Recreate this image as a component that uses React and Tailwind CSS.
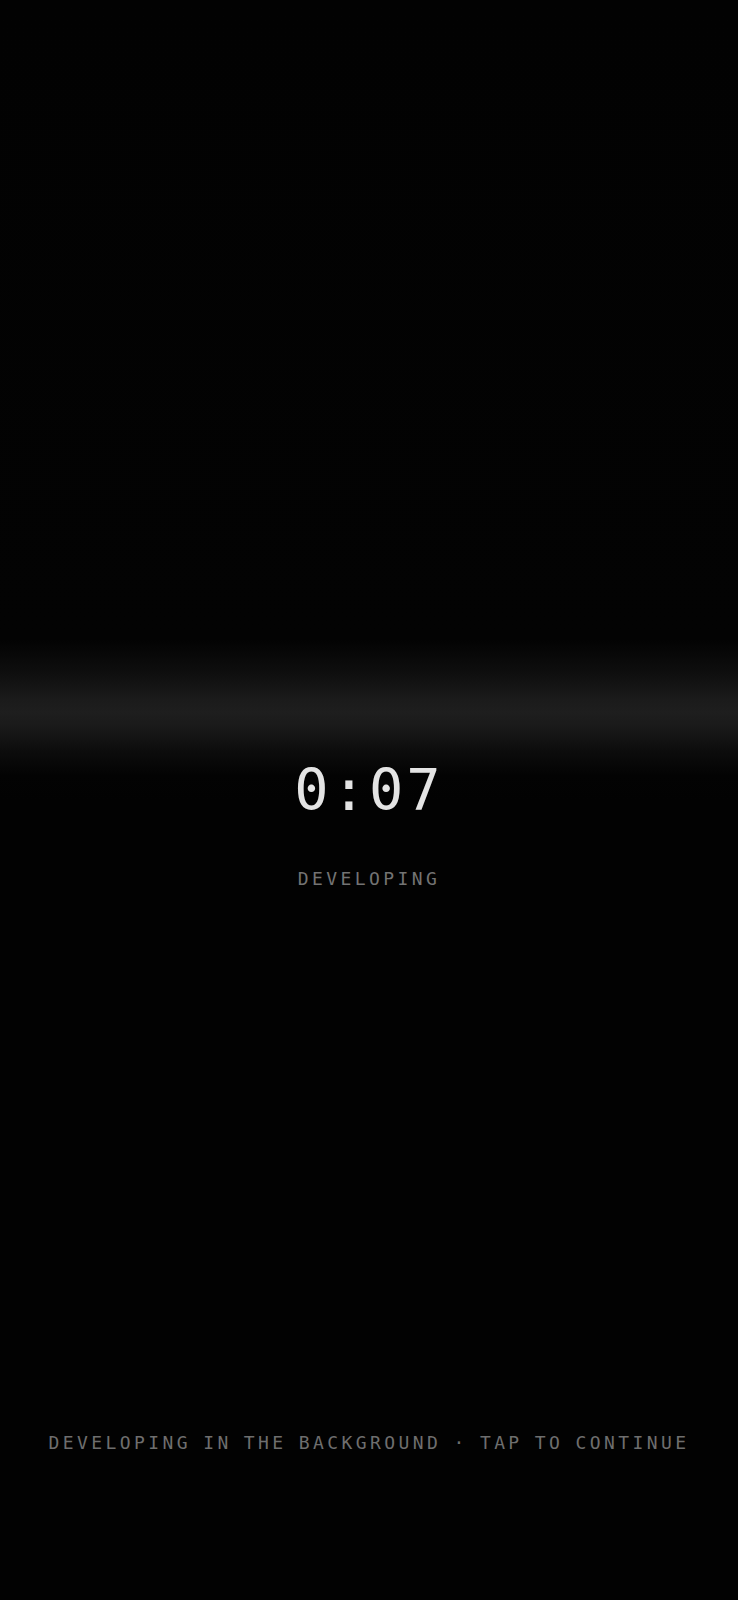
export default function App() {
  return (
    <div className="flex h-[1600px] w-full flex-col items-center bg-[#020202] bg-[linear-gradient(to_bottom,#020202_0px,#030303_640px,#0e0e0e_672px,#1b1b1b_700px,#1e1e1e_712px,#1a1a1a_726px,#0c0c0c_752px,#030303_776px,#020202_800px)] font-['DejaVu_Sans_Mono',monospace]">
      <div className="pt-[762px] text-center text-[57px] leading-none tracking-[3px] text-[#e4e4e4]">
        0:07
      </div>
      <div className="mt-[51px] text-center text-[18px] leading-none tracking-[3.4px] text-[#737373]">
        DEVELOPING
      </div>
      <div className="mt-auto pb-[148px] text-center text-[18px] leading-none tracking-[3.4px] [word-spacing:-2px] text-[#6e6e6e]">
        DEVELOPING IN THE BACKGROUND · TAP TO CONTINUE
      </div>
    </div>
  );
}
